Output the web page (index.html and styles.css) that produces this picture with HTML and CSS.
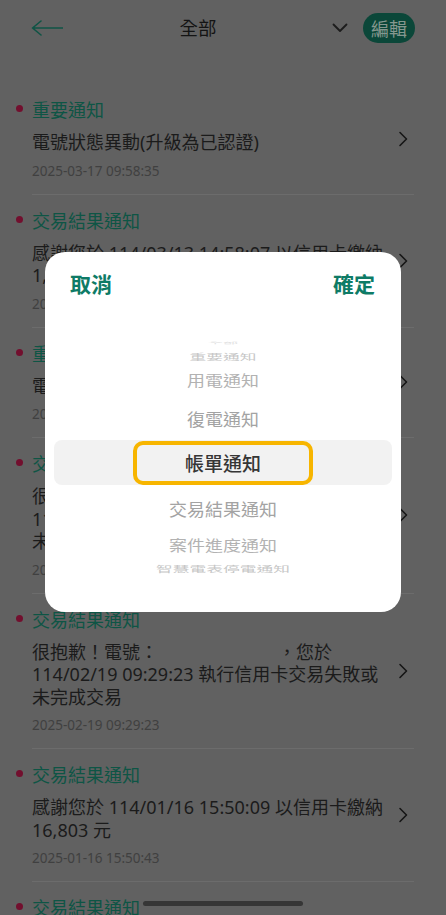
FILE: index.html
```html
<!DOCTYPE html>
<html lang="zh-Hant">
<head>
<meta charset="utf-8">
<title>通知</title>
<link rel="stylesheet" href="styles.css">
</head>
<body>
<div class="screen">
  <header class="topbar">
    <button class="back" aria-label="返回">
      <svg width="32" height="16" viewBox="0 0 32 16"><path d="M32 8H1.5M10 1L1.5 8L10 15" fill="none" stroke="#0f5445" stroke-width="1.6" stroke-linejoin="round" stroke-linecap="round"/></svg>
    </button>
    <h1 class="title">全部</h1>
    <svg class="caret" width="16" height="10" viewBox="0 0 16 10"><path d="M1.5 1.5L8 8L14.5 1.5" fill="none" stroke="#1c1c1c" stroke-width="1.8" stroke-linecap="round" stroke-linejoin="round"/></svg>
    <button class="edit">編輯</button>
  </header>

  <ul class="list">
    <li class="item">
      <div class="item-main">
        <div class="item-title">重要通知</div>
        <p class="item-body">電號狀態異動(升級為已認證)</p>
        <div class="item-date">2025-03-17 09:58:35</div>
      </div>
      <svg class="chev" width="10" height="16" viewBox="0 0 10 16"><path d="M2 1.5L8.5 8L2 14.5" fill="none" stroke="#161616" stroke-width="1.6" stroke-linecap="round" stroke-linejoin="round"/></svg>
    </li>
    <li class="item">
      <div class="item-main">
        <div class="item-title">交易結果通知</div>
        <p class="item-body">感謝您於 114/03/13 14:58:07 以信用卡繳納 1,286 元</p>
        <div class="item-date">2025-03-13 14:58:41</div>
      </div>
      <svg class="chev" width="10" height="16" viewBox="0 0 10 16"><path d="M2 1.5L8.5 8L2 14.5" fill="none" stroke="#161616" stroke-width="1.6" stroke-linecap="round" stroke-linejoin="round"/></svg>
    </li>
    <li class="item">
      <div class="item-main">
        <div class="item-title">重要通知</div>
        <p class="item-body">電號狀態異動(升級為已認證)</p>
        <div class="item-date">2025-03-05 10:12:09</div>
      </div>
      <svg class="chev" width="10" height="16" viewBox="0 0 10 16"><path d="M2 1.5L8.5 8L2 14.5" fill="none" stroke="#161616" stroke-width="1.6" stroke-linecap="round" stroke-linejoin="round"/></svg>
    </li>
    <li class="item">
      <div class="item-main">
        <div class="item-title">交易結果通知</div>
        <p class="item-body">很抱歉！電號：<span class="redact"></span>，您於 114/02/19 09:31:05 執行信用卡交易失敗或未完成交易</p>
        <div class="item-date">2025-02-19 09:31:05</div>
      </div>
      <svg class="chev" width="10" height="16" viewBox="0 0 10 16"><path d="M2 1.5L8.5 8L2 14.5" fill="none" stroke="#161616" stroke-width="1.6" stroke-linecap="round" stroke-linejoin="round"/></svg>
    </li>
    <li class="item">
      <div class="item-main">
        <div class="item-title">交易結果通知</div>
        <p class="item-body">很抱歉！電號：<span class="redact"></span>，您於 114/02/19 09:29:23 執行信用卡交易失敗或未完成交易</p>
        <div class="item-date">2025-02-19 09:29:23</div>
      </div>
      <svg class="chev" width="10" height="16" viewBox="0 0 10 16"><path d="M2 1.5L8.5 8L2 14.5" fill="none" stroke="#161616" stroke-width="1.6" stroke-linecap="round" stroke-linejoin="round"/></svg>
    </li>
    <li class="item">
      <div class="item-main">
        <div class="item-title">交易結果通知</div>
        <p class="item-body">感謝您於 114/01/16 15:50:09 以信用卡繳納 16,803 元</p>
        <div class="item-date">2025-01-16 15:50:43</div>
      </div>
      <svg class="chev" width="10" height="16" viewBox="0 0 10 16"><path d="M2 1.5L8.5 8L2 14.5" fill="none" stroke="#161616" stroke-width="1.6" stroke-linecap="round" stroke-linejoin="round"/></svg>
    </li>
    <li class="item">
      <div class="item-main">
        <div class="item-title">交易結果通知</div>
        <p class="item-body">感謝您於 114/01/02 11:20:15 以信用卡繳納 2,410 元</p>
        <div class="item-date">2025-01-02 11:20:40</div>
      </div>
      <svg class="chev" width="10" height="16" viewBox="0 0 10 16"><path d="M2 1.5L8.5 8L2 14.5" fill="none" stroke="#161616" stroke-width="1.6" stroke-linecap="round" stroke-linejoin="round"/></svg>
    </li>
  </ul>

  <div class="overlay">
    <div class="sheet">
      <div class="sheet-head">
        <button class="sheet-btn">取消</button>
        <button class="sheet-btn">確定</button>
      </div>
      <div class="picker">
        <div class="opt opt-4"><span>全部</span></div>
        <div class="opt opt-3 top"><span>重要通知</span></div>
        <div class="opt opt-2 top"><span>用電通知</span></div>
        <div class="opt opt-1"><span>復電通知</span></div>
        <div class="opt opt-sel"><span class="sel-label">帳單通知</span></div>
        <div class="opt opt-1"><span>交易結果通知</span></div>
        <div class="opt opt-2 bottom"><span>案件進度通知</span></div>
        <div class="opt opt-3 bottom"><span>智慧電表停電通知</span></div>
      </div>
    </div>
  </div>

  <div class="home-bar"></div>
</div>
</body>
</html>
```

FILE: styles.css
```css
* { box-sizing: border-box; }

html, body {
  margin: 0;
  padding: 0;
}

body {
  font-family: "Noto Sans", "Noto Sans CJK TC", sans-serif;
  background: #616161;
  color: #1b1b1b;
}

.screen {
  position: relative;
  width: 446px;
  height: 915px;
  overflow: hidden;
  background: #616161;
}

/* ---------- top bar ---------- */
.topbar {
  display: flex;
  align-items: center;
  height: 56px;
  padding: 0 31px 0 31px;
}

.back {
  display: flex;
  align-items: center;
  width: 33px;
  height: 30px;
  padding: 0;
  border: 0;
  background: none;
}

.title {
  flex: 1;
  margin: 0;
  text-align: center;
  font-size: 18.5px;
  font-weight: 400;
  line-height: 26px;
  color: #141414;
}

.caret {
  display: block;
  margin-right: 15px;
}

.edit {
  width: 52px;
  height: 30px;
  padding: 0;
  border: 0;
  border-radius: 15px;
  background: #0b4739;
  color: #85978f;
  font-family: "Noto Sans CJK TC", sans-serif;
  font-size: 18px;
  line-height: 30px;
}

/* ---------- list ---------- */
.list {
  list-style: none;
  margin: 0;
  padding: 28px 0 0;
}

.item {
  display: flex;
  align-items: center;
  gap: 8px;
  margin: 0 32px;
  padding: 14px 0;
  border-bottom: 1px solid #6c6c6c;
}

.item-main {
  width: 358px;
}

.item-title {
  display: flex;
  align-items: center;
  font-size: 18px;
  line-height: 24px;
  color: #0e5545;
}

.item-title::before {
  content: "";
  width: 7px;
  height: 7px;
  margin: -3px 9px 0 -16px;
  border-radius: 50%;
  background: #720f2e;
}

.item-body {
  margin: 9px 0 0;
  font-size: 18px;
  line-height: 22.5px;
  color: #1b1b1b;
}

.redact {
  display: inline-block;
  width: 120px;
}

.item-date {
  margin-top: 8px;
  font-size: 13.5px;
  line-height: 18px;
  color: #404040;
}

.chev {
  display: block;
  flex: none;
  margin-right: 6px;
}

/* ---------- picker sheet ---------- */
.overlay {
  position: absolute;
  inset: 0;
  display: flex;
  justify-content: center;
  align-items: flex-start;
  padding-top: 252px;
}

.sheet {
  width: 356px;
  height: 360px;
  border-radius: 20px;
  background: #ffffff;
}

.sheet-head {
  display: flex;
  justify-content: space-between;
  padding: 17px 26px 0 25px;
}

.sheet-btn {
  padding: 0;
  border: 0;
  background: none;
  font-family: "Noto Sans CJK TC", sans-serif;
  font-size: 21px;
  font-weight: 700;
  line-height: 28px;
  color: #0e7b66;
}

.picker {
  display: flex;
  flex-direction: column;
  margin-top: 42px;
  padding: 0 9px;
  font-family: "Noto Sans CJK TC", sans-serif;
  font-size: 18px;
}

.opt {
  display: flex;
  align-items: center;
  justify-content: center;
  line-height: 20px;
  overflow: visible;
}

.opt span {
  display: inline-block;
}

.opt-4 { height: 8px; }
.opt-4 span { transform: scale(0.85, 0.12); color: #dedede; }

.opt-3 { height: 18px; }
.opt-3.bottom { height: 17px; }
.opt-3 span { transform: scale(0.93, 0.45); color: #c6c6c6; }

.opt-2 { height: 30px; }
.opt-2.bottom { height: 29px; }
.opt-2 span { transform: scale(1, 0.8); color: #b2b2b2; }

.opt-1 { height: 45px; }
.opt-1 span { transform: scaleY(0.95); color: #a3a3a3; }

.opt-sel {
  height: 45px;
  border-radius: 8px;
  background: #f2f2f2;
}

.sel-label {
  display: flex !important;
  align-items: center;
  justify-content: center;
  width: 180px;
  height: 44px;
  border: 4px solid #f7b500;
  border-radius: 10px;
  font-size: 19px;
  font-weight: 500;
  color: #363636;
}

/* ---------- home indicator ---------- */
.home-bar {
  position: absolute;
  left: 143px;
  bottom: 9px;
  width: 160px;
  height: 5px;
  border-radius: 3px;
  background: #363636;
}
```
